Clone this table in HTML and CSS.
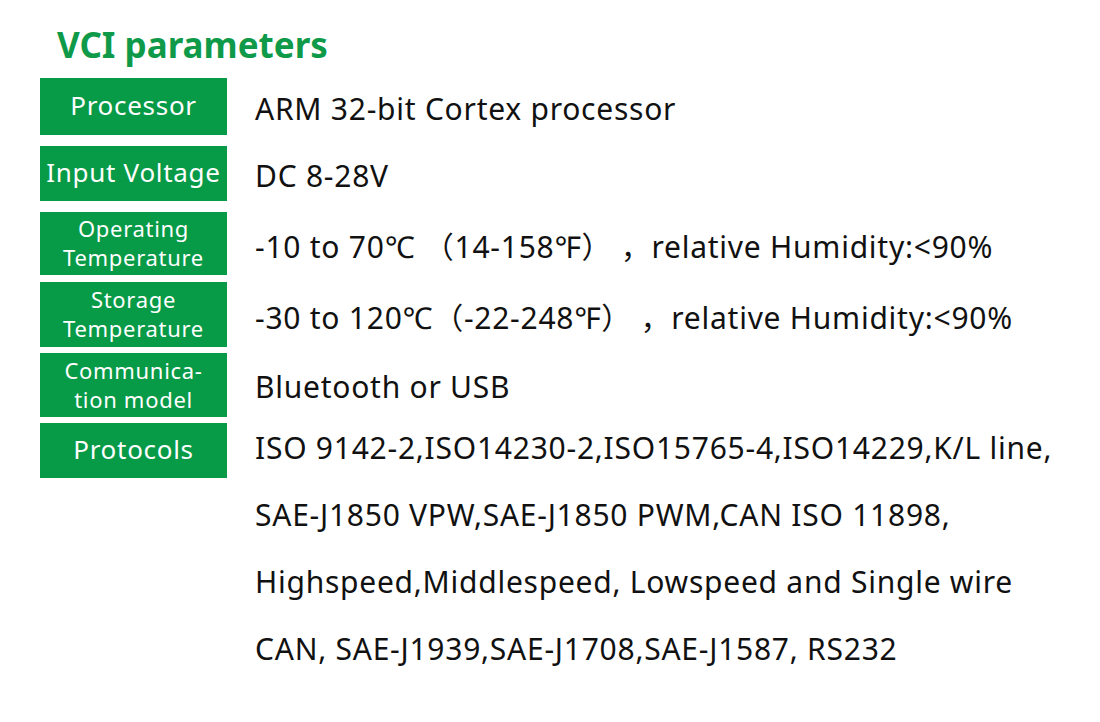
FILE: index.html
```html
<!DOCTYPE html>
<html lang="en">
<head>
<meta charset="utf-8">
<title>VCI parameters</title>
<link rel="stylesheet" href="styles.css">
</head>
<body>
<main class="sheet">
  <h1 class="title">VCI parameters</h1>
  <div class="table">
    <div class="row row-processor">
      <div class="label">Processor</div>
      <div class="value">ARM 32-bit Cortex processor</div>
    </div>
    <div class="row row-voltage">
      <div class="label">Input Voltage</div>
      <div class="value">DC 8-28V</div>
    </div>
    <div class="row row-optemp">
      <div class="label label-small">Operating<br>Temperature</div>
      <div class="value">-10 to 70℃ （14-158℉） ，relative Humidity:&lt;90%</div>
    </div>
    <div class="row row-sttemp">
      <div class="label label-small">Storage<br>Temperature</div>
      <div class="value">-30 to 120℃（-22-248℉） ，relative Humidity:&lt;90%</div>
    </div>
    <div class="row row-comm">
      <div class="label label-small">Communica-<br>tion model</div>
      <div class="value">Bluetooth or USB</div>
    </div>
    <div class="row row-proto">
      <div class="label">Protocols</div>
      <div class="value value-multi">ISO 9142-2,ISO14230-2,ISO15765-4,ISO14229,K/L line,<br>SAE-J1850 VPW,SAE-J1850 PWM,CAN ISO 11898,<br>Highspeed,Middlespeed, Lowspeed and Single wire<br>CAN, SAE-J1939,SAE-J1708,SAE-J1587, RS232</div>
    </div>
  </div>
</main>
</body>
</html>
```

FILE: styles.css
```css
html, body {
  margin: 0;
  padding: 0;
  background: #ffffff;
}

.sheet {
  width: 1100px;
  height: 722px;
  box-sizing: border-box;
  padding: 22px 0 0 40px;
  font-family: "Noto Sans", "Noto Sans CJK SC", sans-serif;
}

.title {
  margin: 0 0 0 17px;
  font-family: "Noto Sans", sans-serif;
  font-weight: 700;
  font-size: 35px;
  line-height: 46px;
  color: #0f9a4a;
}

.table {
  margin-top: 10px;
  display: flex;
  flex-direction: column;
}

.row {
  display: flex;
  align-items: center;
}

.label {
  width: 187px;
  flex: none;
  align-self: stretch;
  background: #079a47;
  color: #ffffff;
  display: flex;
  align-items: center;
  justify-content: center;
  text-align: center;
  font-size: 26px;
  font-weight: 400;
  letter-spacing: 0.7px;
  line-height: 30px;
  padding-bottom: 4px;
  box-sizing: border-box;
}

.label-small {
  font-size: 22px;
  line-height: 29px;
  padding-bottom: 1px;
}

.value {
  margin-left: 28px;
  font-size: 30px;
  letter-spacing: 0.75px;
  color: #111111;
  white-space: nowrap;
  padding-top: 3px;
}

.row-processor { height: 57px; margin-bottom: 11px; }
.row-voltage { height: 55px; margin-bottom: 11px; }
.row-optemp { height: 63px; margin-bottom: 7px; }
.row-sttemp { height: 65px; margin-bottom: 6px; }
.row-comm { height: 64px; margin-bottom: 6px; }

.row-proto {
  align-items: flex-start;
}
.row-proto .label {
  height: 55px;
  align-self: flex-start;
}

.value-multi {
  line-height: 67px;
  margin-top: -9px;
  padding-top: 0;
}
```
